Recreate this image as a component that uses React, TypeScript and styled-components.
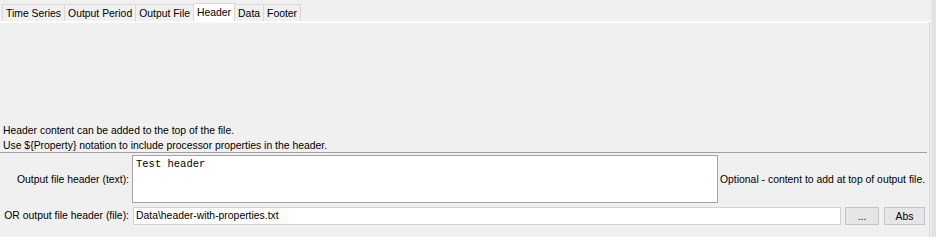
import React, { useState } from "react";
import styled, { createGlobalStyle } from "styled-components";

const GlobalStyle = createGlobalStyle`
  html, body {
    margin: 0;
    padding: 0;
    background: #f0f0f0;
  }
  body {
    font-family: "Liberation Sans", Arial, sans-serif;
    font-size: 10.4px;
    color: #000;
  }
`;

const Window = styled.div`
  width: 936px;
  height: 237px;
  display: flex;
  background: #f0f0f0;
  overflow: hidden;
`;

const Main = styled.div`
  width: 930px;
  display: flex;
  flex-direction: column;
`;

const EdgeStrip = styled.div`
  margin-left: auto;
  width: 4px;
  background: #e2e2e2;
  border-left: 1px solid #e8e8e8;
`;

const TabBar = styled.div`
  height: 21px;
  padding-left: 2px;
  display: flex;
  align-items: flex-end;
  box-sizing: border-box;
`;

const Tab = styled.div<{ $active?: boolean }>`
  box-sizing: border-box;
  height: ${(p) => (p.$active ? "18px" : "17px")};
  padding: 0 3px;
  padding-top: ${(p) => (p.$active ? "0" : "1px")};
  display: flex;
  align-items: center;
  background: ${(p) => (p.$active ? "#ffffff" : "#f0f0f0")};
  border: 1px solid #d9d9d9;
  border-bottom: none;
  border-left: none;
  cursor: default;
  white-space: nowrap;

  &:first-child {
    border-left: 1px solid #d9d9d9;
  }
`;

const Panel = styled.div`
  flex: 1;
  border-top: 2px solid #fcfcfc;
  border-right: 1px solid #d9d9d9;
  display: flex;
  flex-direction: column;
  justify-content: flex-end;
  padding-bottom: 12px;
`;

const Note = styled.div`
  padding: 3px 0 0 3px;
  line-height: 12px;
  white-space: nowrap;
`;

const Separator = styled.div`
  height: 1px;
  background: #a0a0a0;
  margin: 0 2px 2px 0;
`;

const FormRow = styled.div<{ $gap?: number }>`
  display: flex;
  align-items: center;
  margin-top: ${(p) => p.$gap ?? 0}px;
`;

const Label = styled.label`
  width: 126px;
  padding-left: 3px;
  text-align: right;
  white-space: nowrap;
  flex-shrink: 0;
`;

const TextArea = styled.textarea`
  box-sizing: border-box;
  width: 586px;
  height: 48px;
  margin: 0 2px 0 3px;
  padding: 2px 3px;
  resize: none;
  border: 1px solid #a4a4a4;
  background: #fff;
  font-family: "Liberation Mono", "Courier New", monospace;
  font-size: 10.5px;
  line-height: 13px;
  color: #000;
  outline: none;
`;

const Hint = styled.span`
  white-space: nowrap;
`;

const TextInput = styled.input`
  box-sizing: border-box;
  width: 708px;
  height: 18px;
  margin-left: 4px;
  padding: 0 2px;
  border: 1px solid #d2d2d2;
  background: #fff;
  font-family: "Liberation Sans", Arial, sans-serif;
  font-size: 10.4px;
  color: #000;
  outline: none;
`;

const Button = styled.button<{ $width: number; $gap: number }>`
  box-sizing: border-box;
  width: ${(p) => p.$width}px;
  height: 18px;
  margin-left: ${(p) => p.$gap}px;
  margin-top: 1px;
  padding: 0;
  border: 1px solid #c4c4c4;
  background: #e6e6e6;
  font-family: "Liberation Sans", Arial, sans-serif;
  font-size: 10.4px;
  color: #000;
  cursor: default;
`;

const tabs = ["Time Series", "Output Period", "Output File", "Header", "Data", "Footer"];

const App: React.FC = () => {
  const [active, setActive] = useState("Header");
  const [headerText, setHeaderText] = useState("Test header");
  const [headerFile, setHeaderFile] = useState("Data\\header-with-properties.txt");

  return (
    <Window>
      <GlobalStyle />
      <Main>
        <TabBar>
          {tabs.map((t) => (
            <Tab key={t} $active={t === active} onClick={() => setActive(t)}>
              {t}
            </Tab>
          ))}
        </TabBar>
        <Panel>
          <Note>Header content can be added to the top of the file.</Note>
          <Note>Use ${"{Property}"} notation to include processor properties in the header.</Note>
          <Separator />
          <FormRow>
            <Label>Output file header (text):</Label>
            <TextArea value={headerText} onChange={(e) => setHeaderText(e.target.value)} />
            <Hint>Optional - content to add at top of output file.</Hint>
          </FormRow>
          <FormRow $gap={3}>
            <Label>OR output file header (file):</Label>
            <TextInput value={headerFile} onChange={(e) => setHeaderFile(e.target.value)} />
            <Button $width={34} $gap={4}>...</Button>
            <Button $width={41} $gap={5}>Abs</Button>
          </FormRow>
        </Panel>
      </Main>
      <EdgeStrip />
    </Window>
  );
};

export default App;
